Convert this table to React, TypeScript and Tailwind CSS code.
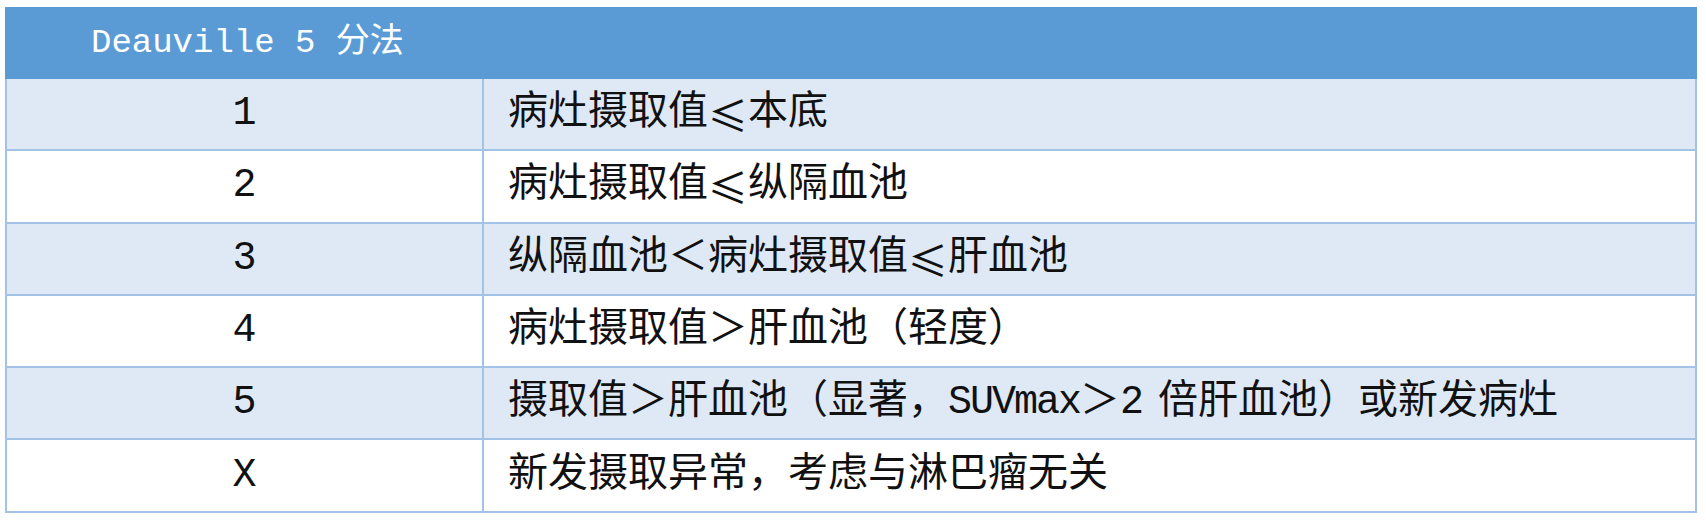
import React from "react";

const le = <span className="font-['Noto_Sans_CJK_SC',sans-serif]">≤</span>;

const rows: { n: string; t: React.ReactNode }[] = [
  { n: "1", t: <>病灶摄取值{le}本底</> },
  { n: "2", t: <>病灶摄取值{le}纵隔血池</> },
  { n: "3", t: <>纵隔血池＜病灶摄取值{le}肝血池</> },
  { n: "4", t: <>病灶摄取值＞肝血池（轻度）</> },
  {
    n: "5",
    t: (
      <>
        摄取值＞肝血池（显著，<span className="tracking-[-2px]">SUVmax</span>＞2<span className="inline-block w-[14px]"></span>倍肝血池）或新发病灶
      </>
    ),
  },
  { n: "X", t: <>新发摄取异常，考虑与淋巴瘤无关</> },
];

export default function App() {
  return (
    <div className="w-[1706px] h-[524px] bg-white pt-[7px] pl-[5px] font-['Liberation_Mono','Noto_Sans_CJK_SC',monospace]">
      <div className="w-[1692px]">
        <div className="h-[72px] bg-[#5b9bd5] flex items-center pl-[86px] text-white text-[34px] leading-none">
          Deauville 5 分法
        </div>
        <div className="border-x-2 border-[#a3c3e6]">
          {rows.map((r, i) => (
            <div
              key={r.n}
              className={
                "h-[72.3px] grid grid-cols-[477px_1fr] border-b-2 border-[#a3c3e6] text-[40px] leading-none text-[#111] " +
                (i % 2 === 0 ? "bg-[#dee9f5]" : "bg-white")
              }
            >
              <div className="flex items-center justify-center border-r-2 border-[#a3c3e6]">{r.n}</div>
              <div className="flex items-center pl-[24px] whitespace-nowrap">{r.t}</div>
            </div>
          ))}
        </div>
      </div>
    </div>
  );
}
